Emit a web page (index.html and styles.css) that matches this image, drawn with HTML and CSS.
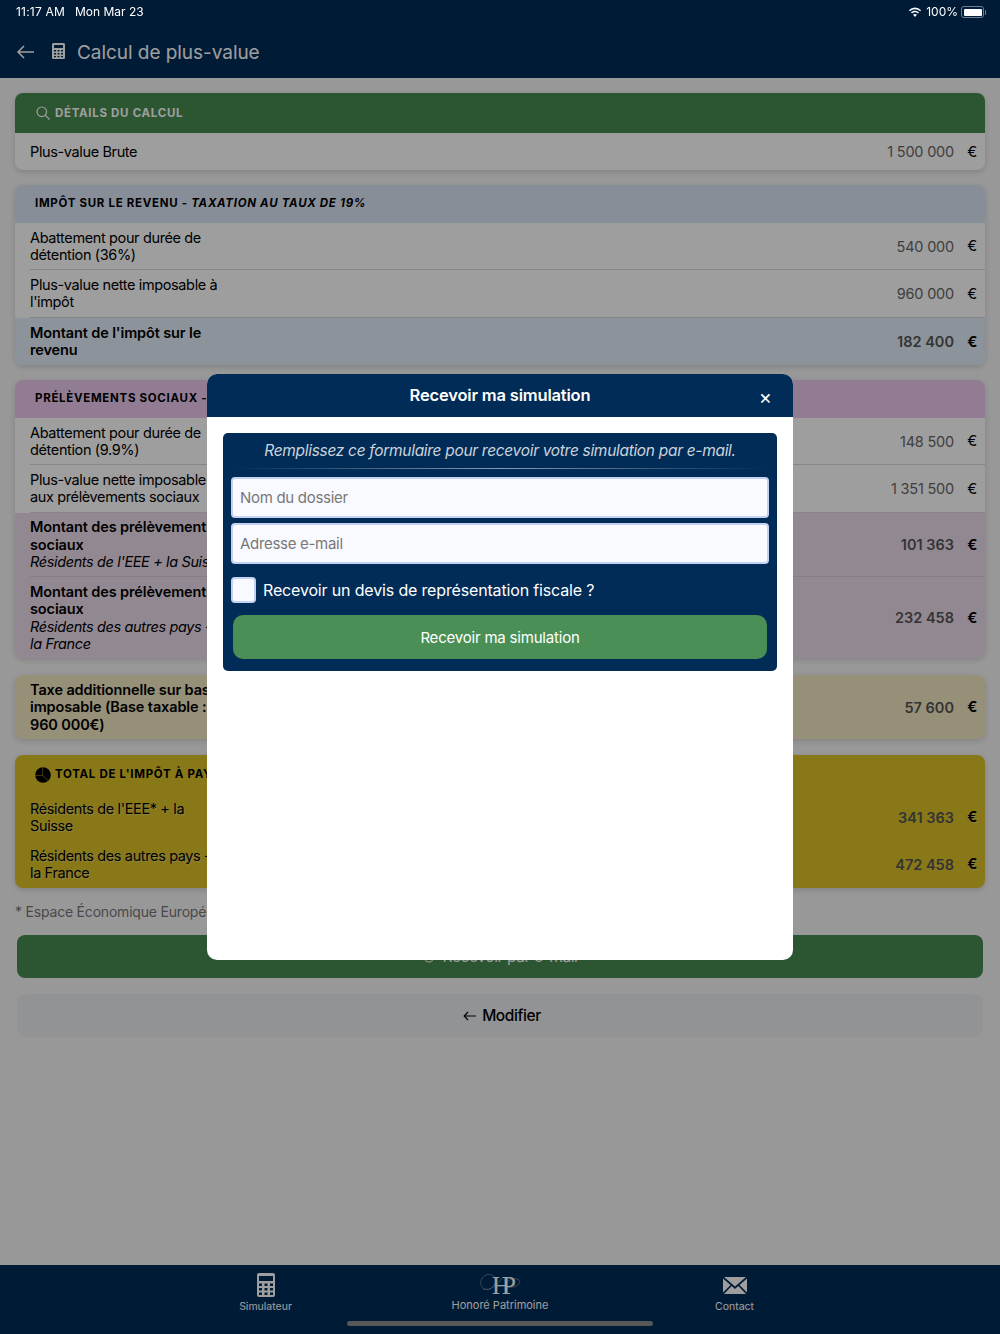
FILE: index.html
```html
<!DOCTYPE html>
<html lang="fr">
<head>
    <meta charset="UTF-8">
    <title>Calcul de plus-value</title>
    <link rel="stylesheet" href="styles.css">
</head>
<body>
    <header class="topbar">
        <div class="status">
            <span class="status-time">11:17 AM</span>
            <span class="status-date">Mon Mar 23</span>
            <span class="status-right">
                <svg class="wifi" width="14" height="11" viewBox="0 0 14 11"><path d="M7 2.2c2 0 3.8.8 5.1 2.1l1-1.1A8.700 8.700 0 0 0 7 .6 8.700 8.700 0 0 0 .9 3.200l1 1.100A7.200 7.200 0 0 1 7 2.200zM7 5.200c1.200 0 2.200.5 3 1.200l1-1.100A5.800 5.800 0 0 0 7 3.700c-1.500 0-3 .6-4 1.600l1 1.100c.8-.7 1.800-1.200 3-1.200zM7 6.900c-.8 0-1.400.3-1.900.8L7 10l1.900-2.300c-.5-.5-1.100-.8-1.900-.8z" fill="#fff"/></svg>
                <span>100%</span>
                <span class="battery"><span class="battery-fill"></span></span>
            </span>
        </div>
        <div class="titlebar">
            <svg class="back" width="20" height="14" viewBox="0 0 20 14"><path d="M18 7H2M8 1L2 7l6 6" fill="none" stroke="#fff" stroke-width="1.500"/></svg>
            <svg class="calc" width="13" height="16" viewBox="0 0 13 16"><path fill-rule="evenodd" d="M1.500 0h10A1.500 1.500 0 0 1 13 1.500v13a1.500 1.500 0 0 1-1.500 1.500h-10A1.500 1.500 0 0 1 0 14.500v-13A1.500 1.500 0 0 1 1.500 0zM2 2v3h9V2zM2 7v1.600h2V7zm3.500 0v1.600h2V7zM9 7v1.600h2V7zM2 10v1.600h2V10zm3.500 0v1.600h2V10zM9 10v1.600h2V10zM2 13v1.300h2V13zm3.500 0v1.300h2V13zM9 13v1.300h2V13z" fill="#fff"/></svg>
            <h1>Calcul de plus-value</h1>
        </div>
    </header>

    <main class="content">
        <section class="card">
            <div class="card-head head-green">
                <svg class="head-icon icon-search" width="14" height="14" viewBox="0 0 14 14"><circle cx="5.800" cy="5.800" r="4.800" fill="none" stroke="#fff" stroke-width="1.200"/><path d="M9.200 9.200L13.500 13.500" stroke="#fff" stroke-width="1.200"/></svg>
                <span>Détails du calcul</span>
            </div>
            <div class="row row-single">
                <div class="label">Plus-value Brute</div>
                <div class="amount">1 500 000</div>
                <div class="euro">€</div>
            </div>
        </section>

        <section class="card">
            <div class="card-head head-blue"><span>Impôt sur le revenu - <i>Taxation au taux de 19%</i></span></div>
            <div class="row line">
                <div class="label">Abattement pour durée de détention (36%)</div>
                <div class="amount">540 000</div>
                <div class="euro">€</div>
            </div>
            <div class="row line">
                <div class="label">Plus-value nette imposable à l'impôt</div>
                <div class="amount">960 000</div>
                <div class="euro">€</div>
            </div>
            <div class="row strong tint-blue">
                <div class="label">Montant de l'impôt sur le revenu</div>
                <div class="amount">182 400</div>
                <div class="euro">€</div>
            </div>
        </section>

        <section class="card">
            <div class="card-head head-pink"><span>Prélèvements sociaux - <i>Taxation au taux de 17.2%</i></span></div>
            <div class="row line">
                <div class="label">Abattement pour durée de détention (9.9%)</div>
                <div class="amount">148 500</div>
                <div class="euro">€</div>
            </div>
            <div class="row line">
                <div class="label">Plus-value nette imposable aux prélèvements sociaux</div>
                <div class="amount">1 351 500</div>
                <div class="euro">€</div>
            </div>
            <div class="row strong tint-pink line">
                <div class="label">Montant des prélèvements sociaux <i class="one-line">Résidents de l'EEE + la Suisse</i></div>
                <div class="amount">101 363</div>
                <div class="euro">€</div>
            </div>
            <div class="row strong tint-pink">
                <div class="label">Montant des prélèvements sociaux <i>Résidents des autres pays - la France</i></div>
                <div class="amount">232 458</div>
                <div class="euro">€</div>
            </div>
        </section>

        <section class="card card-tax">
            <div class="row strong tint-sand">
                <div class="label">Taxe additionnelle sur base imposable (Base taxable : 960 000€)</div>
                <div class="amount">57 600</div>
                <div class="euro">€</div>
            </div>
        </section>

        <section class="card card-total">
            <div class="card-head head-gold">
                <svg class="head-icon" width="16" height="16" viewBox="0 0 16 16"><circle cx="8" cy="8" r="7.800" fill="#000"/><path d="M7.600 0v8.400H0M7.600 8.400l5.800 5.400" fill="none" stroke="#dcc228" stroke-width=".5"/></svg>
                <span>Total de l'impôt à payer</span>
            </div>
            <div class="row shadowed">
                <div class="label">Résidents de l'EEE* + la Suisse</div>
                <div class="amount amount-bold">341 363</div>
                <div class="euro euro-bold">€</div>
            </div>
            <div class="row shadowed">
                <div class="label">Résidents des autres pays - la France</div>
                <div class="amount amount-bold">472 458</div>
                <div class="euro euro-bold">€</div>
            </div>
        </section>

        <p class="footnote">* Espace Économique Européen</p>

        <div class="btn btn-mail">
            <svg width="12" height="12" viewBox="0 0 12 12"><circle cx="6" cy="6" r="5" fill="none" stroke="#fff"/><circle cx="6" cy="6" r="2" fill="none" stroke="#fff"/></svg>
            <span>Recevoir par e-mail</span>
        </div>
        <div class="btn btn-back">
            <svg width="14" height="10" viewBox="0 0 14 10"><path d="M13 5H1.500M5 1L1.200 5 5 9" fill="none" stroke="#000" stroke-width="1.200"/></svg>
            <span>Modifier</span>
        </div>
    </main>

    <footer class="tabbar">
        <div class="tab">
            <svg width="18" height="24" viewBox="0 0 18 24"><path fill-rule="evenodd" d="M2 0h14a2 2 0 0 1 2 2v20a2 2 0 0 1-2 2H2a2 2 0 0 1-2-2V2a2 2 0 0 1 2-2zm0 3v5h14V3zm0 7.500V13h3v-2.500zm5.500 0V13h3v-2.500zm5.500 0V13h3v-2.500zM2 15v2.500h3V15zm5.500 0v2.500h3V15zm5.500 0v2.500h3V15zM2 19.500V22h3v-2.500zm5.500 0V22h3v-2.500zm5.500 0V22h3v-2.500z" fill="#fff"/></svg>
            <span>Simulateur</span>
        </div>
        <div class="tab tab-home">
            <div class="logo">
                <svg width="42" height="22" viewBox="0 0 42 22"><g fill="none" stroke="#fff" stroke-width=".5"><ellipse cx="9" cy="9" rx="7" ry="8" transform="rotate(35 9 9)"/><ellipse cx="34" cy="10" rx="7" ry="4" transform="rotate(-15 34 10)"/><path d="M4 16c8 2 14-4 20-12"/></g></svg>
                <span class="logo-text">HP</span>
            </div>
            <span>Honoré Patrimoine</span>
        </div>
        <div class="tab tab-contact">
            <svg width="24" height="17" viewBox="0 0 24 17"><path d="M1 0h22L12 9.500zM0 1.500L7.500 8 0 15.500zM24 1.500L16.500 8 24 15.500zM8.700 9L12 12l3.300-3 7.700 8H1z" fill="#fff"/></svg>
            <span>Contact</span>
        </div>
    </footer>
    <div class="home-bar"></div>

    <div class="overlay"></div>

    <div class="modal">
        <div class="modal-head">
            <h2>Recevoir ma simulation</h2>
            <span class="close">×</span>
        </div>
        <div class="modal-body">
            <form class="form-box">
                <p class="form-intro">Remplissez ce formulaire pour recevoir votre simulation par e-mail.</p>
                <div class="form-rule"></div>
                <input class="field" type="text" placeholder="Nom du dossier">
                <input class="field" type="text" placeholder="Adresse e-mail">
                <div class="check-row">
                    <span class="check"></span>
                    <span class="check-text">Recevoir un devis de représentation fiscale ?</span>
                </div>
                <div class="submit">Recevoir ma simulation</div>
            </form>
        </div>
    </div>
</body>
</html>
```

FILE: styles.css
```css
* {
    box-sizing: border-box;
}

html, body {
    margin: 0;
    height: 100%;
}

body {
    display: flex;
    flex-direction: column;
    height: 1334px;
    overflow: hidden;
    background: #f6f6f6;
    color: #000;
    font-family: Inter, "Liberation Sans", sans-serif;
    font-size: 14.5px;
    line-height: 17.5px;
}

/* top */
.topbar {
    height: 78px;
    background: #002c57;
    flex: none;
}

.status {
    position: relative;
    z-index: 3;
    display: flex;
    align-items: center;
    height: 24px;
    padding: 0 15px 0 16px;
    color: #fff;
    font-size: 12px;
}

.status-time {
    letter-spacing: 0.2px;
}

.status-date {
    margin-left: 10px;
}

.status-right {
    display: flex;
    align-items: center;
    margin-left: auto;
}

.wifi {
    margin-right: 4px;
}

.battery {
    position: relative;
    display: block;
    width: 23px;
    height: 12px;
    margin: 0 1px 0 3px;
    padding: 1.500px;
    border: 1px solid #6f7f92;
    border-radius: 3px;
}

.battery::after {
    content: "";
    position: absolute;
    right: -3px;
    top: 2.500px;
    width: 1.500px;
    height: 5px;
    background: #6f7f92;
    border-radius: 0 1px 1px 0;
}

.battery-fill {
    display: block;
    height: 100%;
    background: #fff;
    border-radius: 1px;
}

.titlebar {
    display: flex;
    align-items: center;
    height: 54px;
    padding: 1px 0 0 16px;
}

.calc {
    margin: -2px 0 0 16px;
}

.titlebar h1 {
    margin: 3px 0 0 12px;
    color: #fff;
    font-size: 19px;
    font-weight: 400;
    letter-spacing: -0.050px;
}

/* cards */
.content {
    flex: 1;
    padding: 15px 15px 0;
}

.card {
    margin-bottom: 15px;
    background: #fff;
    border-radius: 8px;
    box-shadow: 0 2px 6px rgba(0, 0, 0, 0.15);
    overflow: hidden;
}

.card-head {
    display: flex;
    align-items: center;
    height: 38px;
    padding-left: 20px;
    font-size: 11.500px;
    font-weight: 700;
    letter-spacing: 0.7px;
    text-transform: uppercase;
}

.head-icon {
    margin-right: 4px;
    flex: none;
}

.icon-search {
    margin: -2px 5px 0 1px;
}

.head-green {
    height: 40px;
    padding-top: 1px;
    background: #478a52;
    color: #fff;
}

.head-blue {
    background: #dce6f6;
}

.head-pink {
    background: #ecc8ee;
}

.head-gold {
    height: 39px;
    padding-top: 1px;
}

.row {
    display: flex;
    align-items: center;
    min-height: 47.330px;
    padding: 5.500px 8px 5.500px 15px;
    letter-spacing: -0.370px;
}

.row-single {
    min-height: 37px;
}

.line {
    background-image: linear-gradient(#d8d8d8, #d8d8d8);
    background-repeat: no-repeat;
    background-position: 15px 100%;
    background-size: 100% 1px;
    padding-bottom: 6.500px;
}

.label {
    width: 190px;
}

.label i {
    display: block;
    font-weight: 400;
    letter-spacing: -0.370px;
}

.label .one-line {
    white-space: nowrap;
}

.amount {
    margin-left: auto;
    padding-top: 1px;
    color: #666;
    letter-spacing: -0.200px;
}

.euro {
    width: 23px;
    text-align: right;
    font-size: 15px;
}

.strong .label {
    font-weight: 600;
    letter-spacing: -0.120px;
}

.strong .amount,
.amount-bold {
    color: #555;
    font-weight: 600;
    letter-spacing: 0;
}

.strong .euro,
.euro-bold {
    font-weight: 600;
}

.tint-blue {
    background-color: #e4eef8;
}

.tint-pink {
    background-color: #ecdcec;
}

.tint-pink.line {
    background-image: linear-gradient(#dcc9dc, #dcc9dc);
}

.tint-sand {
    background-color: #f2e8c2;
}

.card-tax {
    margin-top: 17px;
    margin-bottom: 16px;
}

.card-total {
    background: #dcc228;
}

.row.shadowed {
    min-height: 47px;
}

.shadowed .label,
.shadowed .euro {
    text-shadow: 1px 1px 1px rgba(255, 255, 255, 0.35);
}

.footnote {
    margin: 0 0 15px;
    color: #777;
    font-size: 14px;
    letter-spacing: -0.200px;
}

.btn {
    display: flex;
    align-items: center;
    justify-content: center;
    gap: 5px;
    height: 43px;
    margin: 0 2px 16px;
    border-radius: 8px;
    font-size: 15.500px;
    font-weight: 500;
    letter-spacing: -0.400px;
}

.btn-mail {
    gap: 8px;
    background: #478a52;
    color: #fff;
    font-weight: 400;
}

.btn-back {
    padding-left: 4px;
    background: #eceef1;
}

/* tab bar */
.tabbar {
    display: flex;
    justify-content: center;
    flex: none;
    height: 69px;
    background: #002c57;
    color: #fff;
    font-size: 10.500px;
    line-height: 13px;
}

.tab {
    display: flex;
    flex-direction: column;
    align-items: center;
    width: 234.500px;
    padding-top: 8px;
    gap: 3px;
}

.tab-home {
    font-size: 11px;
}

.tab-contact {
    padding-top: 12px;
    gap: 6px;
}

.logo {
    position: relative;
    display: flex;
    justify-content: center;
    width: 42px;
    height: 22px;
    margin-bottom: 1px;
}

.logo svg {
    opacity: 0.6;
}

.logo-text {
    position: absolute;
    top: 1px;
    left: 0;
    right: 0;
    text-align: center;
    font-family: "Liberation Serif", serif;
    font-size: 25px;
    line-height: 24px;
    letter-spacing: -8px;
}

.home-bar {
    position: absolute;
    left: 347px;
    top: 1321px;
    width: 306px;
    height: 5px;
    background: #8d8d8d;
    border-radius: 3px;
}

/* modal */
.overlay {
    position: fixed;
    inset: 0;
    z-index: 2;
    background: rgba(0, 0, 0, 0.38);
}

.modal {
    position: absolute;
    z-index: 4;
    left: 207px;
    top: 374px;
    width: 586px;
    height: 586px;
    background: #fff;
    border-radius: 10px;
    overflow: hidden;
}

.modal-head {
    position: relative;
    height: 43px;
    background: #002c57;
    color: #fff;
    text-align: center;
}

.modal-head h2 {
    margin: 0;
    font-size: 16.500px;
    font-weight: 600;
    letter-spacing: -0.180px;
    line-height: 43px;
}

.close {
    position: absolute;
    right: 21px;
    top: 13px;
    font-size: 20px;
    line-height: 20px;
}

.modal-body {
    padding: 16px;
}

.form-box {
    display: flex;
    flex-direction: column;
    height: 238px;
    padding: 0 8px;
    background: #002c57;
    border-radius: 5px;
    color: #fff;
}

.form-intro {
    margin: 0;
    padding-top: 9px;
    color: #ccd3dc;
    font-size: 15.500px;
    font-style: italic;
    letter-spacing: -0.310px;
    line-height: 18px;
    text-align: center;
}

.form-rule {
    height: 1px;
    margin: 8px 0;
    background: linear-gradient(90deg, transparent, #8a9ab0, transparent);
}

.field {
    display: block;
    width: 100%;
    height: 41px;
    margin-bottom: 5px;
    padding: 0 7px;
    background: #f9faff;
    border: 2px solid #c3d2f3;
    border-radius: 4px;
    font-family: inherit;
    font-size: 15px;
    letter-spacing: -0.300px;
}

.field::placeholder {
    color: #777;
}

.check-row {
    display: flex;
    align-items: center;
    gap: 7px;
    margin-top: 8px;
    font-size: 16px;
    letter-spacing: -0.160px;
}

.check {
    width: 25px;
    height: 26px;
    background: #f9faff;
    border: 2px solid #c3d2f3;
    border-radius: 4px;
}

.check-text {
    padding-top: 2px;
}

.submit {
    height: 44px;
    margin: 12px 2px 0;
    background: #4a9056;
    border-radius: 10px;
    font-size: 15px;
    letter-spacing: -0.200px;
    line-height: 45px;
    text-align: center;
}
```
